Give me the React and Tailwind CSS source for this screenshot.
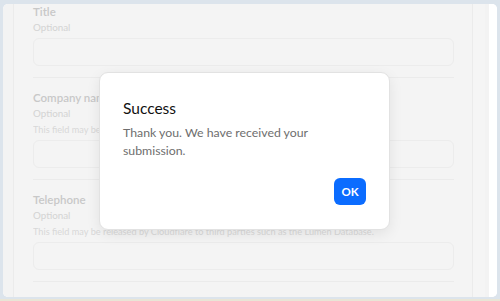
const fields = [
  { label: "Title", note: null },
  { label: "Company name", note: "This field may be released by Cloudflare to third parties such as the Lumen Database." },
  { label: "Telephone", note: "This field may be released by Cloudflare to third parties such as the Lumen Database." },
];

const Field = ({ label, note, first }) => (
  <div className={`border-b border-[#ebebeb] pb-[11px] ${first ? "pt-0" : "pt-[12px]"}`}>
    <p className="text-[11.5px] font-semibold leading-[16px] text-[#c8c8c8]">{label}</p>
    <p className="text-[9.8px] leading-[15px] text-[#d3d3d3]">Optional</p>
    {note && <p className="mt-[1px] truncate text-[9.2px] leading-[15px] text-[#d8d8d8]">{note}</p>}
    <div className="mt-[3px] h-[28px] rounded-[6px] border border-[#ececec] bg-[#f4f4f4]" />
  </div>
);

const App = () => {
  return (
    <div
      className="flex h-[301px] w-[500px] flex-col overflow-hidden bg-[#dce4ec]"
      style={{ fontFamily: "Lato, 'Noto Sans', sans-serif" }}
    >
      <div className="relative mx-[3px] mt-[4px] flex h-[293px] overflow-hidden rounded-[5px] bg-white">
        <div className="flex flex-1 bg-[#f3f3f3]">
          <div className="w-[11px] border-r border-[#ebebeb]" />
          <main className="w-[459px] border-r border-[#ebebeb] bg-[#f4f4f4] pl-[19px] pr-[18px]">
            {fields.map((f, i) => (
              <Field key={f.label} label={f.label} note={f.note} first={i === 0} />
            ))}
          </main>
          <div className="w-[12px] bg-[#f5f5f5]" />
        </div>
        <div className="w-[8px] bg-white" />

        <div className="absolute left-[96px] top-[68px] w-[291px] rounded-[9px] border border-[#e2e2e2] bg-white px-[23px] pb-[24px] pt-[24px] shadow-[0_4px_14px_rgba(0,0,0,0.08)]">
          <h2 className="text-[15.5px] font-normal leading-[22px] text-[#111]">Success</h2>
          <p className="mt-[5px] max-w-[225px] text-[12.3px] leading-[18px] text-[#6e6e6e]">
            Thank you. We have received your submission.
          </p>
          <div className="mt-[18px] flex justify-end">
            <button className="h-[27px] w-[32px] rounded-[6px] bg-[#0b6cff] text-[11.5px] font-bold text-white">
              OK
            </button>
          </div>
        </div>
      </div>
      <div className="h-[2px] bg-[#dce4ec]" />
      <div className="h-[2px] bg-[#e9e5d6]" />
    </div>
  );
};

export default App;
